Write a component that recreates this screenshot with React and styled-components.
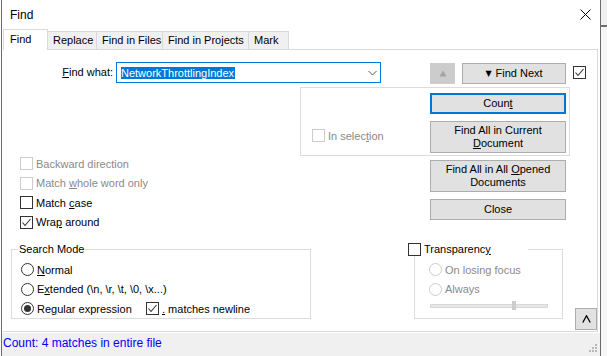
import React from "react"
import styled, { createGlobalStyle } from "styled-components"

const GlobalStyle = createGlobalStyle`
  html, body {
    margin: 0;
    padding: 0;
    background: #fff;
  }
  body {
    font-family: "Liberation Sans", Arial, sans-serif;
    font-size: 11px;
    color: #000;
  }
  * {
    box-sizing: border-box;
  }
`

const Screen = styled.div`
  display: flex;
  width: 607px;
  height: 356px;
  overflow: hidden;
`

const Window = styled.div`
  margin-left: 1px;
  width: 600px;
  height: 356px;
  border-left: 1px solid #6b6b6b;
  border-right: 1px solid #6b6b6b;
  display: flex;
  flex-direction: column;
  background: #fff;
`

const Backdrop = styled.div`
  flex: 1;
  background: linear-gradient(#f0f0f0 0 25px, #707070 25px 27px, #f7f7f7 27px);
`

const TitleBar = styled.div`
  height: 29px;
  display: flex;
  align-items: center;
  justify-content: space-between;
  padding: 0 9px 0 8px;
  font-size: 12px;
`

const TabStrip = styled.div`
  height: 20px;
  display: flex;
  align-items: flex-end;
  padding-left: 1px;
`

const Tab = styled.div`
  width: ${(p) => p.$w}px;
  height: ${(p) => (p.$active ? 21 : 18)}px;
  margin-bottom: ${(p) => (p.$active ? -1 : 0)}px;
  padding: ${(p) => (p.$active ? "3px 0 0 6px" : "2px 0 0 5px")};
  background: ${(p) => (p.$active ? "#fff" : "#f0f0f0")};
  border: 1px solid #d9d9d9;
  border-bottom: none;
  position: relative;
  z-index: ${(p) => (p.$active ? 1 : 0)};
  white-space: nowrap;
  & + & {
    margin-left: -1px;
  }
`

const Panel = styled.div`
  margin-left: 1px;
  width: 595px;
  height: 283px;
  border: 1px solid #d9d9d9;
  border-left: none;
  display: flex;
  flex-direction: column;
`

const FindRow = styled.div`
  display: flex;
  align-items: flex-start;
  margin-top: 12px;
  height: 22px;
`

const FieldLabel = styled.div`
  width: 110px;
  margin-right: 3px;
  text-align: right;
  line-height: 21px;
`

const Combo = styled.div`
  width: 265px;
  height: 21px;
  border: 1px solid #0078d7;
  display: flex;
  align-items: center;
  justify-content: space-between;
  padding: 0 3px 0 4px;
`

const Selected = styled.span`
  background: #0078d7;
  color: #fff;
  line-height: 12px;
  padding: 0 1px 0 0;
`

const ArrowButton = styled.div`
  width: 25px;
  height: 21px;
  margin: 1px 0 0 49px;
  background: #cccccc;
  border: 1px solid #cccccc;
  display: grid;
  place-items: center;
`

const PushButton = styled.div`
  width: ${(p) => p.$w || 136}px;
  height: ${(p) => p.$h || 21}px;
  margin-top: ${(p) => p.$top || 0}px;
  margin-left: ${(p) => p.$left || 0}px;
  background: #e1e1e1;
  border: ${(p) => (p.$focus ? "2px solid #0078d7" : "1px solid #adadad")};
  display: flex;
  align-items: center;
  justify-content: center;
  text-align: center;
  line-height: 13px;
  white-space: pre-line;
`

const Arrow = styled.span`
  font-family: "DejaVu Sans", sans-serif;
  font-size: 8px;
  margin-right: 4px;
`

const Middle = styled.div`
  display: flex;
  margin-top: 3px;
`

const LeftCol = styled.div`
  width: 297px;
  padding: 67px 0 0 17px;
  display: flex;
  flex-direction: column;
`

const Row = styled.div`
  display: flex;
  align-items: center;
  height: 19.5px;
  gap: 3px;
  white-space: nowrap;
  color: ${(p) => (p.$disabled ? "#8a8a8a" : "#000")};
`

const Box = styled.span`
  width: 13px;
  height: 13px;
  flex: none;
  border: 1px solid ${(p) => (p.$disabled ? "#cccccc" : "#333")};
  background: #fff;
  display: grid;
  place-items: center;
`

const Circle = styled.span`
  width: 13px;
  height: 13px;
  flex: none;
  border-radius: 50%;
  border: 1px solid ${(p) => (p.$disabled ? "#cccccc" : "#333")};
  background: #fff;
  display: grid;
  place-items: center;
  &::after {
    content: "";
    width: 7px;
    height: 7px;
    border-radius: 50%;
    background: #333;
    display: ${(p) => (p.$on ? "block" : "none")};
  }
`

const U = styled.span`
  text-decoration: underline;
`

const RightCol = styled.div`
  display: flex;
  flex-direction: column;
`

const SelectionBox = styled.div`
  width: 270px;
  height: 69px;
  border: 1px solid #dcdcdc;
  padding: 5px 3px 2px 0;
  display: flex;
`

const SelectionLeft = styled.div`
  flex: 1;
  padding: 33px 0 0 11px;
`

const ButtonStack = styled.div`
  display: flex;
  flex-direction: column;
  gap: 7px;
  margin-left: ${(p) => p.$left || 0}px;
  margin-top: ${(p) => p.$top || 0}px;
`

const BottomRow = styled.div`
  display: flex;
  align-items: flex-start;
  margin-top: 10px;
  height: 89px;
`

const Group = styled.fieldset`
  margin: 0 0 0 ${(p) => p.$left}px;
  width: ${(p) => p.$w}px;
  height: 77px;
  min-width: 0;
  border: 1px solid #dcdcdc;
  padding: 4px 0 0 ${(p) => p.$pad}px;
`

const Legend = styled.legend`
  padding: 0 1px;
  margin-left: -3px;
  line-height: 14px;
`

const CheckLegend = styled.legend`
  padding: 0;
  margin-left: -21px;
  width: 120px;
  height: 14px;
  background: #fff;
  display: flex;
  align-items: center;
  gap: 3px;
`

const Choice = styled.div`
  width: 122px;
  display: flex;
  align-items: center;
  gap: 3px;
`

const Track = styled.div`
  position: relative;
  width: 118px;
  height: 4px;
  margin: 5px 0 0 1px;
  background: #e7e7e7;
  border: 1px solid #d9d9d9;
`

const Thumb = styled.div`
  position: absolute;
  left: 81px;
  top: -4px;
  width: 4px;
  height: 9px;
  background: #cccccc;
`

const StatusBar = styled.div`
  flex: 1;
  margin-top: 1px;
  background: #f0f0f0;
  display: flex;
  padding-left: 1px;
  color: #0000ff;
  font-size: 12px;
`

const StatusText = styled.div`
  padding-top: 3px;
  line-height: 15px;
`

const Grip = styled.svg`
  margin: auto 3px 4px auto;
`

const Check = () => (
  <svg width="11" height="11" viewBox="0 0 11 11">
    <polyline points="1.5,5.5 4,8.5 9.5,2" fill="none" stroke="#333" strokeWidth="1.1" />
  </svg>
)

const CheckBox = ({ checked, disabled, children }) => (
  <Row $disabled={disabled}>
    <Box $disabled={disabled}>{checked && <Check />}</Box>
    {children && <span>{children}</span>}
  </Row>
)

const RadioOption = ({ on, disabled, children }) => (
  <Row $disabled={disabled}>
    <Circle $on={on} $disabled={disabled} />
    <span>{children}</span>
  </Row>
)

const tabs = [
  ["Find", 45],
  ["Replace", 50],
  ["Find in Files", 67],
  ["Find in Projects", 87],
  ["Mark", 41],
]

export default function App() {
  return (
    <>
      <GlobalStyle />
      <Screen>
        <Window>
          <TitleBar>
            <span>Find</span>
            <svg width="11" height="11" viewBox="0 0 11 11">
              <path d="M0.5 0.5 L10.5 10.5 M10.5 0.5 L0.5 10.5" stroke="#000" strokeWidth="1" />
            </svg>
          </TitleBar>
          <TabStrip>
            {tabs.map(([name, w], i) => (
              <Tab key={name} $w={w} $active={i === 0}>
                {name}
              </Tab>
            ))}
          </TabStrip>
          <Panel>
            <FindRow>
              <FieldLabel>
                <U>F</U>ind what:
              </FieldLabel>
              <Combo>
                <Selected>NetworkThrottlingIndex</Selected>
                <svg width="9" height="6" viewBox="0 0 9 6">
                  <polyline points="0.5,1 4.5,5 8.5,1" fill="none" stroke="#555" strokeWidth="1" />
                </svg>
              </Combo>
              <ArrowButton>
                <svg width="8" height="7" viewBox="0 0 8 7">
                  <polygon points="4,0.5 7.5,6.5 0.5,6.5" fill="#a3a3a3" />
                </svg>
              </ArrowButton>
              <PushButton $w={104} $top={1} $left={7}>
                <Arrow>▼</Arrow>Find Next
              </PushButton>
              <div style={{ marginLeft: 7, marginTop: 4 }}>
                <Box>
                  <Check />
                </Box>
              </div>
            </FindRow>

            <Middle>
              <LeftCol>
                <CheckBox disabled>Backward direction</CheckBox>
                <CheckBox disabled>
                  Match <U>w</U>hole word only
                </CheckBox>
                <CheckBox>
                  Match <U>c</U>ase
                </CheckBox>
                <CheckBox checked>
                  Wra<U>p</U> around
                </CheckBox>
              </LeftCol>
              <RightCol>
                <SelectionBox>
                  <SelectionLeft>
                    <CheckBox disabled>
                      In selec<U>t</U>ion
                    </CheckBox>
                  </SelectionLeft>
                  <ButtonStack>
                    <PushButton $focus>
                      Coun<U>t</U>
                    </PushButton>
                    <PushButton $h={32}>
                      <span>
                        Find All in Current
                        <br />
                        <U>D</U>ocument
                      </span>
                    </PushButton>
                  </ButtonStack>
                </SelectionBox>
                <ButtonStack $left={130} $top={4}>
                  <PushButton $h={32}>
                    <span>
                      Find All in All <U>O</U>pened
                      <br />
                      Documents
                    </span>
                  </PushButton>
                  <PushButton>Close</PushButton>
                </ButtonStack>
              </RightCol>
            </Middle>

            <BottomRow>
              <Group $left={8} $w={300} $pad={9}>
                <Legend>Search Mode</Legend>
                <RadioOption>
                  <U>N</U>ormal
                </RadioOption>
                <RadioOption>
                  E<U>x</U>tended (\n, \r, \t, \0, \x...)
                </RadioOption>
                <Row>
                  <Choice>
                    <Circle $on />
                    <span>
                      Re<U>g</U>ular expression
                    </span>
                  </Choice>
                  <Box>
                    <Check />
                  </Box>
                  <span>
                    <U>.</U> matches newline
                  </span>
                </Row>
              </Group>
              <Group $left={103} $w={149} $pad={14}>
                <CheckLegend>
                  <Box />
                  <span>
                    Transparenc<U>y</U>
                  </span>
                </CheckLegend>
                <RadioOption disabled>On losing focus</RadioOption>
                <RadioOption disabled>Always</RadioOption>
                <Track>
                  <Thumb />
                </Track>
              </Group>
              <PushButton $w={22} $h={22} $left={12} $top={66}>
                <svg width="9" height="8" viewBox="0 0 9 8">
                  <polyline points="0.8,7.5 4.5,0.8 8.2,7.5" fill="none" stroke="#000" strokeWidth="1.3" />
                </svg>
              </PushButton>
            </BottomRow>
          </Panel>
          <StatusBar>
            <StatusText>Count: 4 matches in entire file</StatusText>
            <Grip width="9" height="9" viewBox="0 0 9 9">
              <g fill="#b8b8b8">
                <rect x="7" y="1" width="2" height="2" />
                <rect x="4" y="4" width="2" height="2" />
                <rect x="7" y="4" width="2" height="2" />
                <rect x="1" y="7" width="2" height="2" />
                <rect x="4" y="7" width="2" height="2" />
                <rect x="7" y="7" width="2" height="2" />
              </g>
            </Grip>
          </StatusBar>
        </Window>
        <Backdrop />
      </Screen>
    </>
  )
}
